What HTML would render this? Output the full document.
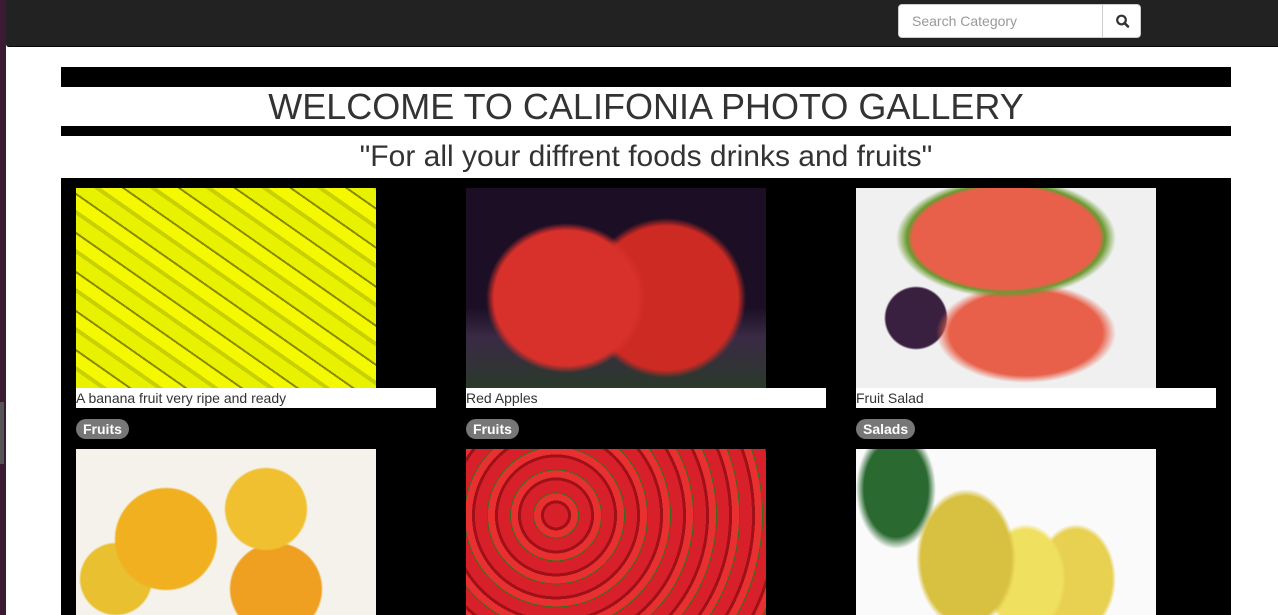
<!DOCTYPE html>
<html><head><style>
*{margin:0;padding:0;box-sizing:border-box}
body{width:1278px;height:615px;overflow:hidden;background:#fff;font-family:"Liberation Sans",sans-serif;position:relative}
.side{position:absolute;left:0;top:0;width:6px;height:615px;background:#3b1a33}
.nav{position:absolute;left:6px;top:0;width:1272px;height:47px;background:#222;border-bottom:1px solid #080808;border-bottom-left-radius:3px}
.search{position:absolute;left:898px;top:4px;width:243px;height:34px;background:#fff;border:1px solid #ccc;border-radius:4px}
.search span{position:absolute;left:13px;top:8px;font-size:14px;color:#999}
.search .btn{position:absolute;left:203px;top:0;width:39px;height:32px;border-left:1px solid #ccc}
.bar{position:absolute;left:61px;width:1170px;background:#000}
h1{position:absolute;left:61px;width:1170px;top:86px;text-align:center;font-weight:normal;font-size:36px;color:#333}
h2{position:absolute;left:61px;width:1170px;top:140px;text-align:center;font-weight:normal;font-size:30px;color:#333}
.gal{position:absolute;left:61px;top:178px;width:1170px;height:437px;background:#000}
.img{position:absolute;width:300px;height:200px}
.cap{position:absolute;width:360px;height:20px;background:#fff;font-size:14px;color:#333;line-height:20px}
.badge{position:absolute;height:20px;background:#777;color:#fff;font-weight:bold;font-size:14px;line-height:20px;padding:0 7px;border-radius:10px}
</style></head><body>
<div class="side"></div>
<div style="position:absolute;left:0;top:402px;width:4px;height:62px;background:#555"></div>
<div class="nav"></div>
<div class="search"><span>Search Category</span><div class="btn"><svg width="39" height="32" viewBox="0 0 39 32"><circle cx="18.5" cy="15" r="4.3" fill="none" stroke="#333" stroke-width="2.2"/><line x1="21.5" y1="18" x2="25" y2="21.5" stroke="#333" stroke-width="2.6" stroke-linecap="round"/></svg></div></div>
<div class="bar" style="top:67px;height:20px"></div>
<h1>WELCOME TO CALIFONIA PHOTO GALLERY</h1>
<div class="bar" style="top:126px;height:10px"></div>
<h2>"For all your diffrent foods drinks and fruits"</h2>
<div class="gal"></div>
<div class="img" style="left:76px;top:188px;background:repeating-linear-gradient(35deg,#e8f200 0 14px,#c8d000 14px 18px,#f4f800 18px 30px,#8a8a00 30px 32px)"></div>
<div class="img" style="left:466px;top:188px;background:radial-gradient(ellipse 80px 75px at 100px 110px,#d8302a 0 90%,transparent 100%),radial-gradient(ellipse 80px 80px at 200px 110px,#cc2a22 0 90%,transparent 100%),linear-gradient(#1c0f25 0 60%,#3a2a45 75%,#2a3a2a 100%)"></div>
<div class="img" style="left:856px;top:188px;background:radial-gradient(ellipse 110px 60px at 150px 50px,#e8604a 0 85%,#6a9a30 90%,transparent 100%),radial-gradient(ellipse 90px 50px at 170px 145px,#e8604a 0 85%,transparent 100%),radial-gradient(circle at 60px 130px,#3a2040 0 30px,transparent 32px),#f0f0f0"></div>
<div class="cap" style="left:76px;top:388px">A banana fruit very ripe and ready</div>
<div class="cap" style="left:466px;top:388px">Red Apples</div>
<div class="cap" style="left:856px;top:388px">Fruit Salad</div>
<div class="badge" style="left:76px;top:419px">Fruits</div>
<div class="badge" style="left:466px;top:419px">Fruits</div>
<div class="badge" style="left:856px;top:419px">Salads</div>
<div class="img" style="left:76px;top:449px;height:166px;background:radial-gradient(circle at 90px 90px,#f0b020 0 50px,transparent 52px),radial-gradient(circle at 190px 60px,#f0c030 0 40px,transparent 42px),radial-gradient(circle at 200px 140px,#f0a020 0 45px,transparent 47px),radial-gradient(circle at 40px 130px,#e8c030 0 35px,transparent 37px),#f4f2ea"></div>
<div class="img" style="left:466px;top:449px;height:166px;background:repeating-radial-gradient(circle at 30% 40%,#d8202a 0 12px,#a01018 12px 15px,#e83030 15px 22px,#3a6a20 22px 23px)"></div>
<div class="img" style="left:856px;top:449px;height:166px;background:radial-gradient(ellipse 50px 70px at 110px 110px,#d8c040 0 90%,transparent 100%),radial-gradient(ellipse 40px 55px at 170px 130px,#f0e060 0 90%,transparent 100%),radial-gradient(ellipse 40px 55px at 220px 130px,#e8d050 0 90%,transparent 100%),radial-gradient(ellipse 40px 60px at 40px 40px,#2a6a30 0 80%,transparent 100%),#fafafa"></div>
</body></html>
